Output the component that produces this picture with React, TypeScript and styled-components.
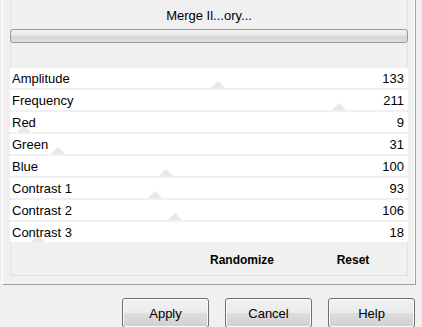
import React from "react";
import styled, { createGlobalStyle } from "styled-components";

const GlobalStyle = createGlobalStyle`
    html, body {
        margin: 0;
        padding: 0;
        background: #f0f0f0;
    }
    body {
        font-family: "Liberation Sans", Arial, sans-serif;
        color: #000;
    }
`;

const Page = styled.div`
    width: 422px;
    height: 327px;
    overflow: hidden;
    background: #f0f0f0;
`;

const Group = styled.div`
    margin-left: 2px;
    width: 405px;
    height: 284px;
    padding-left: 7px;
    border-left: 1px solid #ffffff;
    border-right: 1px solid #a0a0a0;
    border-bottom: 1px solid #a0a0a0;
    box-shadow: inset -1px 0 0 #ffffff;
`;

const Panel = styled.div`
    width: 398px;
    height: 276px;
    display: flex;
    flex-direction: column;
    border-left: 1px solid #e2e2e2;
    border-right: 1px solid #e2e2e2;
    border-bottom: 1px solid #e2e2e2;
    box-sizing: border-box;
`;

const Title = styled.div`
    height: 29px;
    display: flex;
    align-items: center;
    justify-content: center;
    font-size: 13px;
    padding-top: 1px;
    box-sizing: border-box;
`;

const Progress = styled.div`
    height: 14px;
    margin: 0 -1px 0 -1px;
    border: 1px solid #9a9a9a;
    border-radius: 3px;
    box-sizing: border-box;
    background: linear-gradient(#f4f4f4 0%, #e6e6e6 45%, #d6d6d6 55%, #dedede 100%);
`;

const Spacer = styled.div`
    height: 25px;
`;

const Rows = styled.div`
    display: flex;
    flex-direction: column;
    gap: 2px;
    margin: 0 -1px;
`;

const Row = styled.div`
    position: relative;
    height: 20px;
    background: #ffffff;
    display: flex;
    align-items: center;
    justify-content: space-between;
    padding: 0 4px 0 2px;
    font-size: 13px;
    overflow: hidden;
`;

const Label = styled.span`
    position: relative;
    z-index: 1;
`;

const Value = styled.span`
    position: relative;
    z-index: 1;
`;

const Thumb = styled.div`
    position: absolute;
    bottom: 0;
    width: 0;
    height: 0;
    margin-left: -7px;
    border-left: 7px solid transparent;
    border-right: 7px solid transparent;
    border-bottom: 7px solid #e8e8e8;
`;

const Footer = styled.div`
    flex: 1;
    display: flex;
    align-items: center;
    gap: 50px;
    padding: 2px 0 0 199px;
    font-size: 12px;
    font-weight: bold;
`;

const FooterText = styled.span`
    width: 62px;
    text-align: center;
`;

const Buttons = styled.div`
    display: flex;
    justify-content: flex-end;
    gap: 16px;
    padding: 13px 7px 0 0;
`;

const Button = styled.button`
    width: 87px;
    height: 30px;
    font-family: "Liberation Sans", Arial, sans-serif;
    font-size: 13px;
    color: #000;
    border: 1px solid #707070;
    border-radius: 3px;
    background: linear-gradient(#f2f2f2 0%, #ebebeb 48%, #dddddd 52%, #cfcfcf 100%);
    box-shadow: inset 0 0 0 1px #fbfbfb;
    padding: 0;
`;

const sliders = [
    { name: "Amplitude", value: 133 },
    { name: "Frequency", value: 211 },
    { name: "Red", value: 9 },
    { name: "Green", value: 31 },
    { name: "Blue", value: 100 },
    { name: "Contrast 1", value: 93 },
    { name: "Contrast 2", value: 106 },
    { name: "Contrast 3", value: 18 },
];

export default function App() {
    return (
        <Page>
            <GlobalStyle />
            <Group>
                <Panel>
                    <Title>Merge Il...ory...</Title>
                    <Progress />
                    <Spacer />
                    <Rows>
                        {sliders.map((s) => (
                            <Row key={s.name}>
                                <Thumb style={{ left: `${(s.value / 255) * 100}%` }} />
                                <Label>{s.name}</Label>
                                <Value>{s.value}</Value>
                            </Row>
                        ))}
                    </Rows>
                    <Footer>
                        <FooterText>Randomize</FooterText>
                        <FooterText>Reset</FooterText>
                    </Footer>
                </Panel>
            </Group>
            <Buttons>
                <Button>Apply</Button>
                <Button>Cancel</Button>
                <Button>Help</Button>
            </Buttons>
        </Page>
    );
}
